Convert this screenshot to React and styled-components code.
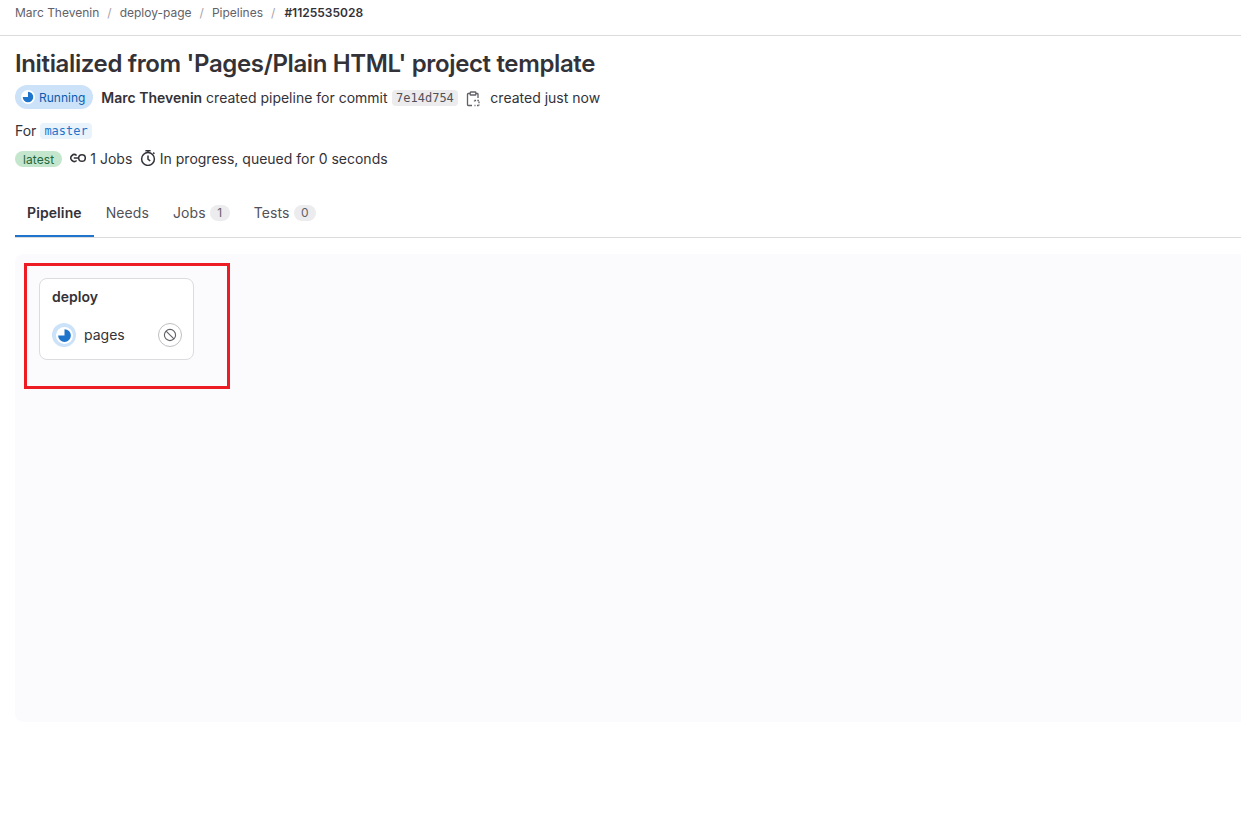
import React from 'react'
import styled, { createGlobalStyle } from 'styled-components'

const GlobalStyle = createGlobalStyle`
html, body {
  margin: 0;
  padding: 0;
  background: #fff;
  overflow: hidden;
}
body {
  font-family: Inter, "Noto Sans", sans-serif;
  font-size: 14px;
  color: #333238;
}
`

const crumbs = ['Marc Thevenin', 'deploy-page', 'Pipelines']

function RunningGlyph({ size = 14 }) {
  return (
    <svg width={size} height={size} viewBox="0 0 16 16">
      <circle cx="8" cy="8" r="8" fill="#fff" />
      <path d="M8 2a6 6 0 1 1-6 6h6V2z" fill="#1f75cb" />
    </svg>
  )
}

function ClipboardIcon() {
  return (
    <svg width="16" height="16" viewBox="0 0 16 16" fill="none" stroke="#626168" strokeWidth="1.3">
      <path d="M5 2.5H3.2a.7.7 0 0 0-.7.7v10.6c0 .4.3.7.7.7H7" />
      <path d="M11 2.5h1.3c.4 0 .7.3.7.7V7" />
      <rect x="5.2" y="1" width="5.6" height="3" rx=".6" />
      <path d="M9.5 9.5h4.5v5M9.5 9.5v1M9.5 14.5h1M12 14.5h2" strokeDasharray="1.6 1.2" />
    </svg>
  )
}

function JobsIcon() {
  return (
    <svg width="16" height="16" viewBox="0 0 16 16" fill="none" stroke="#333238" strokeWidth="1.5">
      <path d="M6.6 5.5A3.4 3.4 0 1 0 6.6 10.5" />
      <path d="M3.8 8h4.6" />
      <circle cx="12" cy="8" r="3.3" />
    </svg>
  )
}

function TimerIcon() {
  return (
    <svg width="16" height="16" viewBox="0 0 16 16" fill="none" stroke="#333238" strokeWidth="1.5">
      <circle cx="8" cy="9" r="6.4" />
      <path d="M5.4 .8h5.2M8 .8v1.8M8 5.6v3.6l2.2 1.8M13.2 2.6l1.2 1.2" />
    </svg>
  )
}

function CancelIcon() {
  return (
    <svg width="14" height="14" viewBox="0 0 16 16" fill="none" stroke="#626168" strokeWidth="1.3">
      <circle cx="8" cy="8" r="6.4" />
      <path d="M3.5 3.5l9 9" />
    </svg>
  )
}

export default function App() {
  return (
    <Page>
      <GlobalStyle />
      <Breadcrumbs>
        {crumbs.map((c) => (
          <React.Fragment key={c}>
            <Crumb>{c}</Crumb>
            <Slash>/</Slash>
          </React.Fragment>
        ))}
        <CurrentCrumb>#1125535028</CurrentCrumb>
      </Breadcrumbs>

      <Header>
        <Title>Initialized from 'Pages/Plain HTML' project template</Title>
        <StatusRow>
          <StatusBadge>
            <RunningGlyph />
            <span>Running</span>
          </StatusBadge>
          <Author>Marc Thevenin</Author>
          <span>created pipeline for commit</span>
          <Sha>7e14d754</Sha>
          <CopyButton>
            <ClipboardIcon />
          </CopyButton>
          <span>created just now</span>
        </StatusRow>
        <RefRow>
          <span>For</span>
          <RefTag>master</RefTag>
        </RefRow>
        <MetaRow>
          <LatestBadge>latest</LatestBadge>
          <MetaItem>
            <JobsIcon />
            <span>1 Jobs</span>
          </MetaItem>
          <MetaItem>
            <TimerIcon />
            <span>In progress, queued for 0 seconds</span>
          </MetaItem>
        </MetaRow>
      </Header>

      <Tabs>
        <Tab $active>Pipeline</Tab>
        <Tab>Needs</Tab>
        <Tab>
          Jobs<Count>1</Count>
        </Tab>
        <Tab>
          Tests<Count>0</Count>
        </Tab>
      </Tabs>

      <Canvas>
        <Highlight />
        <StageCard>
          <StageName>deploy</StageName>
          <JobRow>
            <JobStatus>
              <RunningGlyph size={17} />
            </JobStatus>
            <JobName>pages</JobName>
            <ActionButton>
              <CancelIcon />
            </ActionButton>
          </JobRow>
        </StageCard>
      </Canvas>
    </Page>
  )
}

const Page = styled.div`
  width: 1241px;
  height: 840px;
`

const Breadcrumbs = styled.nav`
  padding-left: 15px;
  padding-bottom: 9px;
  height: 26px;
  display: flex;
  align-items: center;
  border-bottom: 1px solid #dcdcde;
  font-size: 12px;
  line-height: 16px;
`

const Crumb = styled.span`
  color: #626168;
`

const Slash = styled.span`
  color: #a4a3a8;
  margin: 0 8px;
`

const CurrentCrumb = styled.span`
  font-weight: 600;
  color: #333238;
  margin-left: 1px;
`

const Header = styled.header`
  padding-left: 15px;
`

const Title = styled.h1`
  margin: 12px 0 0;
  font-size: 24px;
  line-height: 32px;
  font-weight: 600;
  letter-spacing: -0.36px;
  color: #333238;
`

const StatusRow = styled.div`
  display: flex;
  align-items: center;
  height: 24px;
  margin-top: 5px;
`

const StatusBadge = styled.span`
  display: inline-flex;
  align-items: center;
  gap: 4px;
  height: 24px;
  padding: 0 8px 0 6px;
  border-radius: 12px;
  background: #cbe2f9;
  color: #0b5cad;
  font-size: 12px;
  margin-right: 8px;
`

const Author = styled.strong`
  font-weight: 600;
  margin-right: 4px;
`

const Sha = styled.code`
  font-family: "DejaVu Sans Mono", "Liberation Mono", monospace;
  font-size: 12px;
  line-height: 16px;
  padding: 0 4.5px;
  margin: 2px 0 0 4px;
  background: #ececef;
  border-radius: 4px;
  color: #535158;
`

const CopyButton = styled.span`
  display: inline-flex;
  margin: 4px 9px 0 7px;
`

const RefRow = styled.div`
  display: flex;
  align-items: center;
  height: 20px;
  margin-top: 11px;
  gap: 4px;
`

const RefTag = styled.code`
  font-family: "DejaVu Sans Mono", "Liberation Mono", monospace;
  font-size: 12px;
  line-height: 16px;
  padding: 0 4px;
  margin-top: 2px;
  background: #e9f3fc;
  border-radius: 4px;
  color: #1f75cb;
`

const MetaRow = styled.div`
  display: flex;
  align-items: center;
  height: 20px;
  margin-top: 8px;
`

const LatestBadge = styled.span`
  height: 15px;
  line-height: 16px;
  padding: 1px 8px 0;
  margin: 2px 8px 0 0;
  border-radius: 8px;
  background: #c3e6cd;
  color: #24663b;
  font-size: 12px;
  letter-spacing: 0.1px;
`

const MetaItem = styled.span`
  display: inline-flex;
  align-items: center;
  gap: 4px;
  margin-right: 7.5px;
`

const Tabs = styled.div`
  display: flex;
  margin: 22px 0 0 15px;
  height: 47px;
  border-bottom: 1px solid #dcdcde;
`

const Tab = styled.div`
  display: flex;
  align-items: center;
  height: 47px;
  box-sizing: border-box;
  padding: 0 12px 2px;
  letter-spacing: 0.1px;
  color: ${(p) => (p.$active ? '#333238' : '#535158')};
  font-weight: ${(p) => (p.$active ? 600 : 400)};
  box-shadow: ${(p) => (p.$active ? 'inset 0 -2px 0 #1f75cb' : 'none')};
`

const Count = styled.span`
  margin-left: 4px;
  padding: 0 7.5px;
  height: 16px;
  line-height: 16px;
  border-radius: 8px;
  background: #ececef;
  color: #626168;
  font-size: 12px;
`

const Canvas = styled.section`
  position: relative;
  margin: 16px 0 0 15px;
  height: 468px;
  padding: 24px;
  box-sizing: border-box;
  background: #fbfafd;
  border-radius: 8px 0 0 8px;
`

const Highlight = styled.div`
  position: absolute;
  left: 9px;
  top: 9px;
  width: 206px;
  height: 126px;
  box-sizing: border-box;
  border: 3px solid #ed1c24;
`

const StageCard = styled.div`
  width: 155px;
  height: 82px;
  box-sizing: border-box;
  padding: 10px 11px 0 12px;
  background: #fff;
  border: 1px solid #dcdcde;
  border-radius: 8px;
`

const StageName = styled.div`
  font-weight: 600;
  line-height: 16px;
`

const JobRow = styled.div`
  display: flex;
  align-items: center;
  margin-top: 18px;
`

const JobStatus = styled.span`
  display: flex;
  align-items: center;
  justify-content: center;
  width: 24px;
  height: 24px;
  border-radius: 50%;
  background: #cbe2f9;
`

const JobName = styled.span`
  margin: 0 0 2px 8px;
  flex: 1;
`

const ActionButton = styled.span`
  display: flex;
  align-items: center;
  justify-content: center;
  width: 24px;
  height: 24px;
  box-sizing: border-box;
  border: 1px solid #bfbfc3;
  border-radius: 50%;
`
